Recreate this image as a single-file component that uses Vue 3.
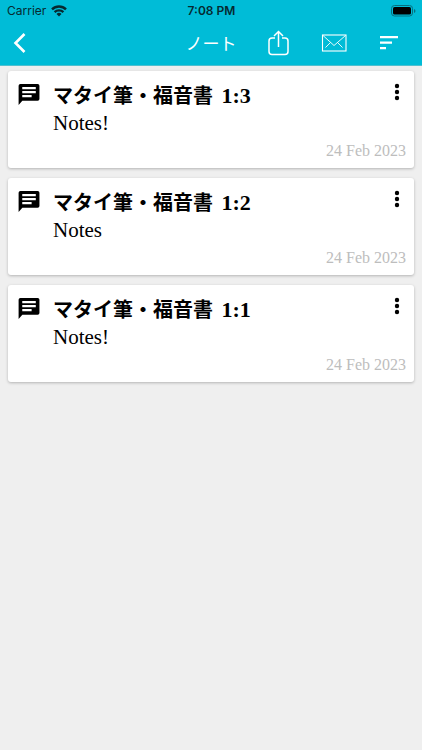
<script setup>
const notes = [
  { id: 3, book: 'マタイ筆・福音書', verse: '1:3', text: 'Notes!', date: '24 Feb 2023' },
  { id: 2, book: 'マタイ筆・福音書', verse: '1:2', text: 'Notes', date: '24 Feb 2023' },
  { id: 1, book: 'マタイ筆・福音書', verse: '1:1', text: 'Notes!', date: '24 Feb 2023' },
]
</script>

<template>
  <div class="screen">
    <header class="top">
      <div class="status">
        <div class="carrier">
          <span>Carrier</span>
          <svg width="16" height="12" viewBox="0 0 16 12" aria-hidden="true">
            <g fill="none" stroke="#062a30" stroke-width="2.4">
              <path d="M1 4.4a10 10 0 0 1 14 0" />
              <path d="M3.6 7.2a6.3 6.3 0 0 1 8.8 0" />
            </g>
            <path d="M8 11.4 5.5 9a3.6 3.6 0 0 1 5 0z" fill="#062a30" />
          </svg>
        </div>
        <span class="clock">7:08 PM</span>
        <div class="battery">
          <svg width="26" height="12" viewBox="0 0 26 12" aria-hidden="true">
            <rect x="1.5" y=".5" width="21" height="10.5" rx="3" fill="none" stroke="#06707f" />
            <rect x="3" y="2" width="18" height="7.5" rx="1.6" fill="#000" />
            <path d="M24 4v4q1.5-.6 1.5-2t-1.5-2z" fill="#06707f" />
          </svg>
        </div>
      </div>
      <nav class="bar">
        <button class="back" type="button" aria-label="Back">
          <svg width="14" height="22" viewBox="0 0 14 22">
            <path d="M11.5 2 2.500 11l9 9" fill="none" stroke="#fff" stroke-width="2.6" />
          </svg>
        </button>
        <h1>ノート</h1>
        <div class="actions">
          <button type="button" aria-label="Share">
            <svg width="22" height="26" viewBox="0 0 22 26" fill="none" stroke="#fff" stroke-width="1.5">
              <path d="M8 8H5Q2 8 2 11v10.500q0 3 3 3h13q3 0 3-3V11q0-3-3-3h-3M11.500 17V1.500M7 6 11.500 1.500 16 6" />
            </svg>
          </button>
          <button type="button" aria-label="Mail">
            <svg width="26" height="18" viewBox="0 0 26 18" fill="none" stroke="#fff">
              <rect x="1.5" y="1" width="23.5" height="16" stroke-width="1.1" />
              <path d="M2 1.500 13 11.500l11.500-10M4.500 13.500l5-5M21.500 13.500l-5-5" stroke-width=".9" />
            </svg>
          </button>
          <button type="button" aria-label="Sort">
            <svg width="20" height="14" viewBox="0 0 20 14" fill="#fff">
              <path d="M1 0h18v2.200H1zM1 5.500h12v2.200H1zM1 11h6v2.200H1z" />
            </svg>
          </button>
        </div>
      </nav>
    </header>

    <main class="list">
      <article v-for="note in notes" :key="note.id" class="card">
        <svg class="icon" width="25" height="25" viewBox="0 0 24 24" aria-hidden="true">
          <path d="M20.800 2H4.200Q2.500 2 2.500 3.700V22l3.600-4h14.700q1.700 0 1.700-1.700V3.700Q22.500 2 20.800 2zM6 8.700h13v2.100H6zM15 14.600H6v-2.100h9zM19 7H6V4.900h13z" />
        </svg>
        <div class="body">
          <h2><span class="book">{{ note.book }}</span> {{ note.verse }}</h2>
          <p>{{ note.text }}</p>
          <time datetime="2023-02-24">{{ note.date }}</time>
        </div>
        <button class="more" type="button" aria-label="More options">
          <svg width="6" height="18" viewBox="0 0 6 18">
            <circle cx="3" cy="3" r="2.2" />
            <circle cx="3" cy="9" r="2.2" />
            <circle cx="3" cy="15" r="2.2" />
          </svg>
        </button>
      </article>
    </main>
  </div>
</template>

<style>
body {
  background: #efefef;
}
</style>

<style scoped>
.screen {
  min-height: 100vh;
  background: #efefef;
  font-family: "Liberation Serif", "Noto Sans CJK JP", serif;
  color: #000;
}

svg {
  display: block;
}

button {
  display: flex;
  align-items: center;
  justify-content: center;
  margin: 0;
  padding: 0;
  border: 0;
  background: none;
}

h1,
h2,
p {
  margin: 0;
}

.top {
  background: #00bcd7;
  border-bottom: 1px solid #4fc0d0;
}

.status {
  display: grid;
  grid-template-columns: 1fr auto 1fr;
  align-items: center;
  height: 21px;
  padding: 0 6px 0 7px;
  font-family: Inter, "Liberation Sans", sans-serif;
  font-size: 12px;
  color: #062a30;
}

.carrier {
  display: flex;
  align-items: center;
  gap: 5px;
}

.clock {
  font-weight: 600;
}

.battery {
  display: flex;
  justify-content: flex-end;
}

.bar {
  display: grid;
  grid-template-columns: 1fr auto 1fr;
  align-items: center;
  height: 44px;
  padding: 0 13px;
}

.back {
  justify-self: start;
}

h1 {
  font-family: "Noto Sans CJK JP", sans-serif;
  font-size: 17px;
  font-weight: 400;
  line-height: 24px;
  color: #fff;
}

.actions {
  display: flex;
  align-items: center;
  justify-content: flex-end;
  gap: 32px;
  padding-right: 10px;
}

.list {
  display: flex;
  flex-direction: column;
  gap: 10px;
  padding: 5px 8px;
}

.card {
  display: flex;
  align-items: flex-start;
  padding: 11px 8px 5px;
  border-radius: 3px;
  background: #fff;
  box-shadow: 0 1px 3px rgba(0, 0, 0, 0.25);
}

.body {
  display: flex;
  flex: 1;
  flex-direction: column;
  padding-left: 12px;
}

h2 {
  font-size: 22px;
  font-weight: 700;
  line-height: 27px;
}

.book {
  margin-right: 3px;
  font-family: "Noto Sans CJK JP", sans-serif;
  font-size: 20px;
  line-height: 20px;
}

p {
  font-size: 21px;
  line-height: 28px;
}

time {
  align-self: flex-end;
  margin-top: 2px;
  font-size: 16px;
  line-height: 24px;
  color: #bdbdbd;
}

.icon {
  flex: none;
}

.more {
  width: 18px;
  height: 20px;
  margin-left: -18px;
}
</style>
